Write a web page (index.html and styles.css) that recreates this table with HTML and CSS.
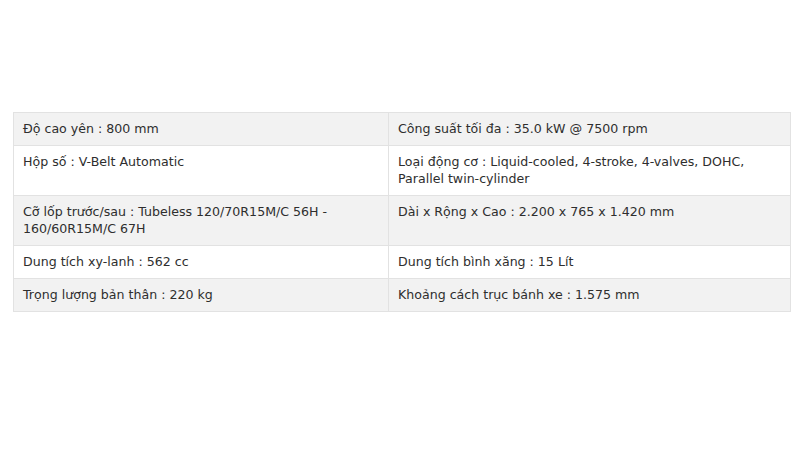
FILE: index.html
```html
<!DOCTYPE html>
<html lang="vi">
<head>
<meta charset="utf-8">
<link rel="stylesheet" href="styles.css">
</head>
<body>
<div class="page">
<table class="specs">
<colgroup><col class="c1"><col class="c2"></colgroup>
<tbody>
<tr class="odd"><td>Độ cao yên : 800 mm</td><td>Công suất tối đa : 35.0 kW @ 7500 rpm</td></tr>
<tr><td>Hộp số : V-Belt Automatic</td><td>Loại động cơ : Liquid-cooled, 4-stroke, 4-valves, DOHC, Parallel twin-cylinder</td></tr>
<tr class="odd"><td>Cỡ lốp trước/sau : Tubeless 120/70R15M/C 56H - 160/60R15M/C 67H</td><td>Dài x Rộng x Cao : 2.200 x 765 x 1.420 mm</td></tr>
<tr><td>Dung tích xy-lanh : 562 cc</td><td>Dung tích bình xăng : 15 Lít</td></tr>
<tr class="odd"><td>Trọng lượng bản thân : 220 kg</td><td>Khoảng cách trục bánh xe : 1.575 mm</td></tr>
</tbody>
</table>
</div>
</body>
</html>
```
FILE: styles.css
```css
html, body {
  margin: 0;
  padding: 0;
  background: #fff;
}
.page {
  padding: 112px 10px 0 13px;
}
.specs {
  width: 777px;
  border-collapse: collapse;
  font-family: "DejaVu Sans", sans-serif;
  font-size: 12.6px;
  color: #2e2e2e;
  table-layout: fixed;
}
.specs .c1 { width: 375px; }
.specs .c2 { width: 402px; }
.specs td {
  border: 1px solid #e2e2e2;
  padding: 7px 9px 8px 9px;
  line-height: 17px;
  vertical-align: top;
}
.specs tr.odd td {
  background: #f2f2f2;
}
```
